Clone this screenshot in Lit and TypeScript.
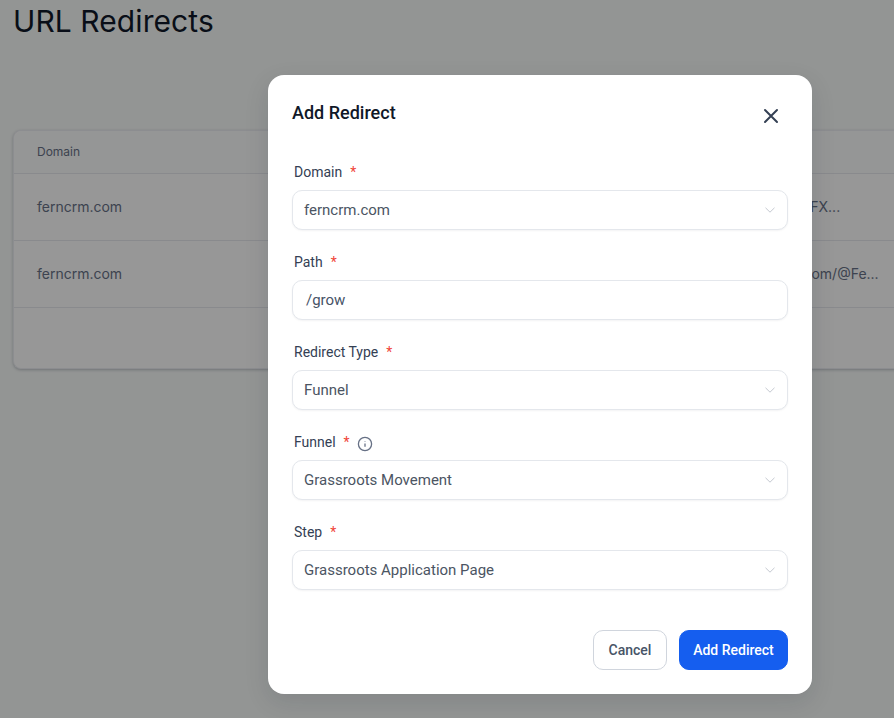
import { LitElement, html, css, svg } from "lit";
import { customElement } from "lit/decorators.js";

const chevron = html`<svg class="chev" viewBox="0 0 10 6" width="10" height="6" fill="none" stroke="#c4c8d0" stroke-width="1">${svg`<path d="M.5 .8 5 5.2 9.5 .8"/>`}</svg>`;

@customElement("app-root")
export class AppRoot extends LitElement {
  static styles = css`
    :host { display: block; width: 894px; height: 718px; overflow: hidden; position: relative; background: #f5f8f7; font-family: Inter, sans-serif; }
    * { box-sizing: border-box; }
    .page { padding: 0 0 0 13px; }
    h1 { margin: 0; height: 130px; font-size: 30px; font-weight: 400; letter-spacing: .08px; line-height: 43px; color: #101828; }
    .table { width: 900px; height: 239px; background: #fcfcfc; border: 1px solid #eaecf0; border-right: 0; border-radius: 8px 0 0 8px; box-shadow: 0 1px 3px rgba(16,24,40,.25); }
    .row { display: grid; grid-template-columns: 624px 1fr; align-items: center; height: 67px; padding: 0 0 1px 23px; border-bottom: 1px solid #e4e7ec; font-size: 14px; color: #667085; }
    .row.head { height: 43px; font-size: 12px; font-weight: 400; background: #f9fafb; border-radius: 8px 0 0 0; }
    .row.last { border-bottom: 0; height: 60px; }
    .overlay { position: absolute; inset: 0; background: rgba(0,0,0,.4); display: flex; align-items: flex-start; padding: 75px 0 0 268px; }
    .modal { width: 544px; height: 619px; background: #fff; border-radius: 16px; padding: 24px; display: flex; flex-direction: column; font-family: Roboto, sans-serif; box-shadow: 0 8px 24px rgba(16,24,40,.12); }
    .head-row { display: flex; justify-content: space-between; align-items: flex-start; height: 63px; }
    h2 { margin: 0; font-size: 18px; font-weight: 500; line-height: 28px; color: #101828; }
    .close { margin: 5px 5px 0 0; display: block; }
    .group { display: flex; flex-direction: column; height: 90px; }
    label { display: flex; align-items: center; height: 20px; margin: 0 0 8px 2px; font-size: 14px; line-height: 20px; color: #344054; }
    .star { color: #f04438; margin-left: 8px; }
    .info { margin: 3px 0 0 7px; }
    .field { height: 40px; display: flex; align-items: center; justify-content: space-between; padding: 0 12px 0 11px; border: 1px solid #e4e7ec; border-radius: 10px; background: #fff; box-shadow: 0 1px 2px rgba(16,24,40,.05); font-size: 15px; color: #4b5563; }
    .field.input { padding-left: 13px; color: #475467; }
    .footer { display: flex; justify-content: flex-end; gap: 12px; margin-top: 18px; }
    button { height: 40px; border-radius: 10px; font: 500 14px Roboto, sans-serif; padding: 0; }
    .cancel { width: 74px; background: #fff; border: 1px solid #d0d5dd; color: #475467; }
    .add { width: 109px; background: #155eef; border: 1px solid #155eef; color: #fff; }
  `;

  private field(name: string, value: string, extra?: unknown) {
    return html`<div class="group">
      <label>${name}<span class="star">*</span>${extra ?? ""}</label>
      <div class="field"><span>${value}</span>${chevron}</div>
    </div>`;
  }

  render() {
    return html`
      <div class="page">
        <h1>URL Redirects</h1>
        <div class="table">
          <div class="row head"><span>Domain</span></div>
          <div class="row"><span>ferncrm.com</span><span>https://a.ferncrm.com/FX...</span></div>
          <div class="row"><span>ferncrm.com</span><span>https://www.youtube.com/@Fe...</span></div>
          <div class="row last"></div>
        </div>
      </div>
      <div class="overlay">
        <div class="modal">
          <div class="head-row">
            <h2>Add Redirect</h2>
            <svg class="close" viewBox="0 0 24 24" width="24" height="24" fill="none" stroke="#344054" stroke-width="2" stroke-linecap="round"><path d="M6 6l12 12M18 6 6 18"/></svg>
          </div>
          ${this.field("Domain", "ferncrm.com")}
          <div class="group">
            <label>Path<span class="star">*</span></label>
            <div class="field input"><span>/grow</span></div>
          </div>
          ${this.field("Redirect Type", "Funnel")}
          ${this.field("Funnel", "Grassroots Movement", html`<svg class="info" viewBox="0 0 16 16" width="16" height="16" fill="none" stroke="#667085" stroke-width="1.3"><circle cx="8" cy="8" r="6.6"/><path d="M8 7.4v3.4"/><path d="M8 5v.6"/></svg>`)}
          ${this.field("Step", "Grassroots Application Page")}
          <div class="footer">
            <button class="cancel">Cancel</button>
            <button class="add">Add Redirect</button>
          </div>
        </div>
      </div>
    `;
  }
}
